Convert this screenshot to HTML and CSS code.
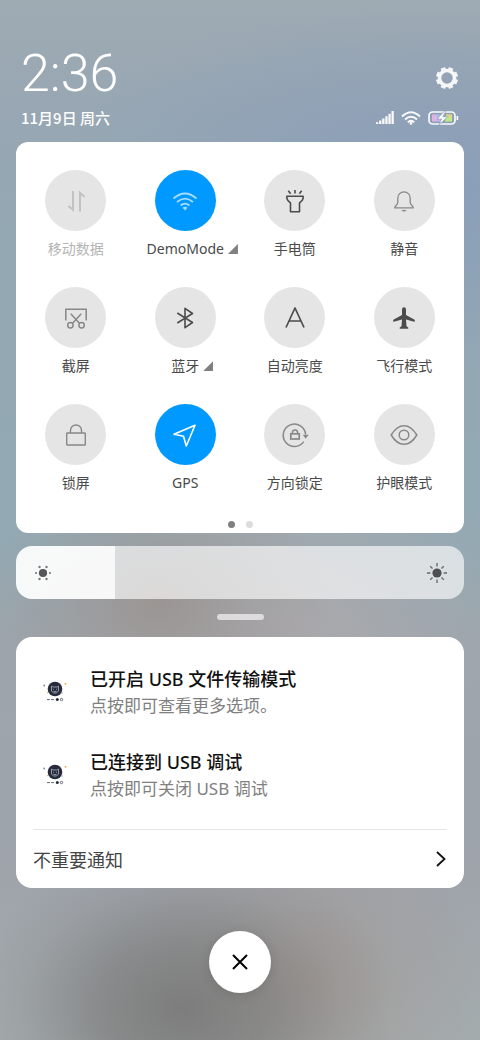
FILE: index.html
```html
<!DOCTYPE html>
<html lang="zh-CN">
<head>
<meta charset="utf-8">
<meta name="viewport" content="width=device-width, initial-scale=1">
<title>控制中心</title>
<link rel="stylesheet" href="styles.css">
</head>
<body>
<main class="shade">
  <header class="header">
    <div class="header-row">
      <time class="clock">2:36</time>
      <button class="icon-button settings" aria-label="设置">
        <svg width="24" height="24" viewBox="0 0 24 24" fill="none" stroke="currentColor">
          <circle cx="12" cy="12" r="7.5" stroke-width="3.6"/>
          <g stroke-width="4.8">
            <path d="M12 1v3M12 20v3M1 12h3M20 12h3" transform="rotate(22.5 12 12)"/>
            <path d="M12 1v3M12 20v3M1 12h3M20 12h3" transform="rotate(67.5 12 12)"/>
          </g>
        </svg>
      </button>
    </div>
    <div class="header-row">
      <span class="date">11月9日 周六</span>
      <div class="status">
        <svg width="18" height="14" viewBox="0 0 18 14" fill="currentColor"><path d="M0 11.2h2.3V13H0zM3.1 9.6h2.3V13H3.1zM6.2 7.6h2.3V13H6.2zM9.3 5.2h2.3V13H9.3zM12.4 2.8h2.3V13h-2.3zM15.5 0h2.3v13h-2.3z"/></svg>
        <svg width="20" height="14" viewBox="0 0 20 14" fill="none" stroke="currentColor" stroke-width="2"><path d="M1 5.4Q10-3 19 5.4M4 8.4q6-5.2 12 0M6.8 11.2q3.2-2.6 6.4 0"/><circle cx="10" cy="12.4" r="1.3" fill="currentColor" stroke="none"/></svg>
        <svg width="31" height="14" viewBox="0 0 31 14" fill="none">
          <rect x="1" y="1" width="26" height="12" rx="3.5" stroke="currentColor" stroke-width="1.7"/>
          <path d="M4 3.5h5v7H4z" fill="#e3b6ea"/><path d="M9 3.5h4l-4 5z" fill="#9fc4ef"/><path d="M9 8.5l4-1v3H9z" fill="#c9b7ee"/>
          <path d="M18 3.5h6v7h-7z" fill="#c2ee86"/><path d="M18 3.5h6l-3 4z" fill="#e8d08e"/>
          <path d="M16.5 0L9 8h4.6L11 14l8.6-8.3h-4.8L18 0z" fill="currentColor" stroke="#92a4b9" stroke-width=".7"/>
          <path d="M28.5 5h1.7v4h-1.7z" fill="currentColor"/>
        </svg>
      </div>
    </div>
  </header>

  <section class="panel tiles-panel" aria-label="快捷开关">
    <div class="tiles">
      <button class="tile disabled" disabled>
        <span class="tile-icon"><svg width="28" height="28" viewBox="0 0 28 28" fill="currentColor"><path d="M10 4h2v21l-6.4-5.6 1.2-1.2 3.2 2.4zM17 24.5h2V8.2l3.2 2.4 1.2-1.2L17 3.6z"/></svg></span>
        <span class="tile-label">移动数据</span>
      </button>
      <button class="tile active" aria-pressed="true">
        <span class="tile-icon faded"><svg width="28" height="28" viewBox="0 0 28 28" fill="none" stroke="currentColor" stroke-width="1.8"><path d="M2.5 11.5Q14 1.6 25.5 11.5M6 15q8-6.8 16 0M9.6 18.5q4.4-3.8 8.8 0"/><path d="M11.6 20.7q2.4-1.8 4.8 0L14 23.4z" fill="currentColor" stroke="none"/></svg></span>
        <span class="tile-label more">DemoMode</span>
      </button>
      <button class="tile dark">
        <span class="tile-icon"><svg width="28" height="28" viewBox="0 0 28 28" fill="none" stroke="currentColor" stroke-width="1.6"><path d="M5.8 9.2h16.4c0 3.6-1 4.6-3.7 6.7v8.8h-9v-8.8c-2.7-2.1-3.7-3.1-3.7-6.7zM14 3v3.6M7.3 3.8l2.3 2.9M20.7 3.8l-2.3 2.9" stroke-linejoin="round"/></svg></span>
        <span class="tile-label">手电筒</span>
      </button>
      <button class="tile">
        <span class="tile-icon"><svg width="28" height="28" viewBox="0 0 28 28" fill="none" stroke="currentColor" stroke-width="1.3"><path d="M7.8 11a6.2 6.2 0 0 1 12.4 0v4.5c0 2.4 3 3.2 3 5.4H4.8c0-2.2 3-3 3-5.4z" stroke-linejoin="round"/><path d="M11.2 23h5.6l-2 1.6h-1.6z" fill="currentColor" stroke="none"/></svg></span>
        <span class="tile-label">静音</span>
      </button>

      <button class="tile">
        <span class="tile-icon"><svg width="28" height="28" viewBox="0 0 28 28" fill="none" stroke="currentColor" stroke-width="1.5"><path d="M3.8 16.5V5.3h20.4v11.2M8.8 9.8l8.6 9.4M19.2 9.8l-8.6 9.4"/><circle cx="8.4" cy="21.3" r="2.7"/><circle cx="19.6" cy="21.3" r="2.7"/></svg></span>
        <span class="tile-label">截屏</span>
      </button>
      <button class="tile dark">
        <span class="tile-icon"><svg width="28" height="28" viewBox="0 0 28 28" fill="none" stroke="currentColor" stroke-width="1.6"><path d="M6.3 9l15.2 9.5L14 23.7V4.3l7.5 5.2L6.3 19" stroke-linejoin="round"/></svg></span>
        <span class="tile-label more">蓝牙</span>
      </button>
      <button class="tile dark">
        <span class="tile-icon"><svg width="28" height="28" viewBox="0 0 28 28" fill="none" stroke="currentColor" stroke-width="1.7"><path d="M5 23.5L14 4l9 19.5M8 17h12" stroke-linejoin="round"/></svg></span>
        <span class="tile-label">自动亮度</span>
      </button>
      <button class="tile dark">
        <span class="tile-icon"><svg width="28" height="28" viewBox="0 0 28 28" fill="currentColor"><path d="M12 5.2a2 2 0 0 1 4 0v5.7l8.2 4.6c.9.6.9 2.2 0 2.2L16 15.4l.5 6.8 1.8 1.2v1.4H9.7v-1.4l1.8-1.2.5-6.8-8.2 2.3c-.9 0-.9-1.6 0-2.2l8.2-4.6z"/></svg></span>
        <span class="tile-label">飞行模式</span>
      </button>

      <button class="tile">
        <span class="tile-icon"><svg width="28" height="28" viewBox="0 0 28 28" fill="none" stroke="currentColor" stroke-width="1.4"><rect x="4.7" y="12" width="18.6" height="12" rx=".6"/><path d="M8.5 12V9.5a5.5 5.5 0 0 1 11 0V12"/></svg></span>
        <span class="tile-label">锁屏</span>
      </button>
      <button class="tile active" aria-pressed="true">
        <span class="tile-icon"><svg width="28" height="28" viewBox="0 0 28 28" fill="none" stroke="currentColor" stroke-width="1.6"><path d="M24 4.3L3 13.3l9.5 2L15.3 25z" stroke-linejoin="round"/></svg></span>
        <span class="tile-label">GPS</span>
      </button>
      <button class="tile">
        <span class="tile-icon"><svg width="28" height="28" viewBox="0 0 28 28" fill="none" stroke="currentColor" stroke-width="1.5"><path d="M22.7 20.6A11.2 11.2 0 1 1 24.6 13.5"/><path d="M21.8 13.8h5.8l-2.9 4z" fill="currentColor" stroke="none"/><rect x="9.8" y="12.8" width="8.4" height="5.2" stroke-width="1.7"/><path d="M11.4 12.5v-1a2.6 2.6 0 0 1 5.2 0v1"/></svg></span>
        <span class="tile-label">方向锁定</span>
      </button>
      <button class="tile">
        <span class="tile-icon"><svg width="28" height="28" viewBox="0 0 28 28" fill="none" stroke="currentColor" stroke-width="1.5"><path d="M1.2 14C5 7.6 9.4 4.7 14 4.7S23 7.6 26.8 14C23 20.4 18.6 23.3 14 23.3S5 20.4 1.2 14z" stroke-linejoin="round"/><circle cx="14" cy="14" r="4.8"/></svg></span>
        <span class="tile-label">护眼模式</span>
      </button>
    </div>
    <div class="pager"><span class="dot current"></span><span class="dot"></span></div>
  </section>

  <div class="brightness">
    <input class="brightness-range" type="range" min="0" max="100" value="22" aria-label="亮度">
    <svg class="sun sun-low" width="22" height="22" viewBox="0 0 22 22" fill="#555759"><circle cx="11" cy="11" r="4.1"/><g fill="#777a7c"><circle cx="4" cy="11" r="1.1"/><circle cx="18" cy="11" r="1.1"/><circle cx="7.5" cy="5" r="1.2"/><circle cx="14.5" cy="5" r="1.2"/><circle cx="7.5" cy="17" r="1.2"/><circle cx="14.5" cy="17" r="1.2"/></g></svg>
    <svg class="sun sun-high" width="22" height="22" viewBox="0 0 22 22" fill="#4d4f50"><circle cx="11" cy="11" r="4.6"/><path d="M11 1v3.4M11 17.6V21M1 11h3.4M17.6 11H21M4.2 4.2l2.3 2.3M15.5 15.5l2.3 2.3M4.2 17.8l2.3-2.3M15.5 6.5l2.3-2.3" stroke="#666869" stroke-width="1.3"/></svg>
  </div>

  <div class="grabber"></div>

  <section class="panel notifications" aria-label="通知">
    <article class="notice">
      <svg class="notice-icon" width="26" height="26" viewBox="0 0 26 26"><circle cx="13" cy="12" r="7.3" fill="#272c3d"/><path d="M9.5 9l1.4 1h4.2l1.4-1v5l-2 2h-3l-2-2z" fill="none" stroke="#9498a4"/><path d="M11 12.3h1M14 12.3h1M11.5 14.5h3" stroke="#9498a4"/><path d="M5 22.6h3M9 22.6h3" stroke="#686b75"/><circle cx="15.3" cy="22.5" r="1.5" fill="#272c3d"/><circle cx="19.5" cy="22.5" r="1.2" fill="none" stroke="#686b75"/><circle cx="23.5" cy="6.7" r="1" fill="#eeae62"/><circle cx="2.2" cy="8.5" r=".9" fill="#7d8795"/><circle cx="5.5" cy="15.5" r=".7" fill="#edb477"/><circle cx="20" cy="16" r=".7" fill="#8b8ea0"/></svg>
      <div class="notice-text"><h2 class="notice-title">已开启 USB 文件传输模式</h2><p class="notice-detail">点按即可查看更多选项。</p></div>
    </article>
    <article class="notice">
      <svg class="notice-icon" width="26" height="26" viewBox="0 0 26 26"><circle cx="13" cy="12" r="7.3" fill="#272c3d"/><path d="M9.5 9l1.4 1h4.2l1.4-1v5l-2 2h-3l-2-2z" fill="none" stroke="#9498a4"/><path d="M11 12.3h1M14 12.3h1M11.5 14.5h3" stroke="#9498a4"/><path d="M5 22.6h3M9 22.6h3" stroke="#686b75"/><circle cx="15.3" cy="22.5" r="1.5" fill="#272c3d"/><circle cx="19.5" cy="22.5" r="1.2" fill="none" stroke="#686b75"/><circle cx="23.5" cy="6.7" r="1" fill="#eeae62"/><circle cx="2.2" cy="8.5" r=".9" fill="#7d8795"/><circle cx="5.5" cy="15.5" r=".7" fill="#edb477"/><circle cx="20" cy="16" r=".7" fill="#8b8ea0"/></svg>
      <div class="notice-text"><h2 class="notice-title">已连接到 USB 调试</h2><p class="notice-detail">点按即可关闭 USB 调试</p></div>
    </article>
    <button class="unimportant">
      <span>不重要通知</span>
      <svg width="12" height="18" viewBox="0 0 12 18" fill="none" stroke="#111" stroke-width="1.8"><path d="M2 2l7.5 7L2 16"/></svg>
    </button>
  </section>

  <button class="close" aria-label="关闭">
    <svg width="18" height="18" viewBox="0 0 18 18" fill="none" stroke="#000" stroke-width="2"><path d="M2 2l14 14M16 2L2 16"/></svg>
  </button>
</main>
</body>
</html>
```
FILE: styles.css
```css
* {
  box-sizing: border-box;
}

body {
  margin: 0;
  font-family: "Noto Sans", "Noto Sans CJK SC", sans-serif;
  color: #444;
}

button {
  margin: 0;
  padding: 0;
  border: 0;
  background: none;
  color: inherit;
  font: inherit;
}

svg {
  display: block;
  flex: none;
}

.shade {
  display: flex;
  flex-direction: column;
  min-height: 100vh;
  padding: 44px 16px 47px;
  background:
    radial-gradient(ellipse 44% 16% at 38% 97%, rgba(120, 120, 119, 0.9), rgba(121, 121, 120, 0.62) 40%, rgba(128, 128, 130, 0.2) 75%, transparent),
    radial-gradient(ellipse 36% 16% at 64% 94%, rgba(162, 149, 141, 0.7), rgba(162, 152, 147, 0.35) 50%, transparent),
    radial-gradient(ellipse 36% 13% at 33% 58%, rgba(154, 146, 142, 0.85), rgba(158, 151, 149, 0.45) 50%, transparent),
    radial-gradient(ellipse 45% 18% at 62% 60%, rgba(171, 169, 172, 0.9), rgba(168, 169, 173, 0.5) 55%, transparent),
    radial-gradient(ellipse 80% 18% at 90% 18%, rgba(137, 157, 186, 0.9), rgba(140, 158, 184, 0.5) 55%, transparent),
    linear-gradient(#9fabb3, #98a7b3 10%, #93a8b3 24%, #93a9b3 53%, #9da5ac 62%, #9fa4ab 84%, #a4abad);
}

.header {
  display: grid;
  gap: 3px;
  padding: 0 5px;
  margin-bottom: 13px;
  color: #fff;
}

.header-row {
  display: flex;
  align-items: center;
  justify-content: space-between;
}

.clock {
  font: 300 52px/60px Roboto, sans-serif;
}

.settings {
  padding-top: 8px;
  opacity: 0.9;
}

.date {
  font-family: "Noto Sans CJK SC", sans-serif;
  font-size: 15px;
  line-height: 22px;
  font-weight: 500;
}

.status {
  display: flex;
  align-items: center;
  gap: 7px;
  opacity: 0.95;
}

.panel {
  border-radius: 16px;
  background: #fff;
}

.tiles-panel {
  padding: 28px 5px 5px;
  border-radius: 12px;
}

.tiles {
  display: grid;
  grid-template-columns: repeat(4, 1fr);
  row-gap: 28px;
}

.tile {
  display: flex;
  flex-direction: column;
  align-items: center;
  gap: 8px;
}

.tile-icon {
  display: grid;
  place-items: center;
  width: 61px;
  height: 61px;
  border-radius: 50%;
  background: #e5e5e5;
  color: #888;
}

.tile-label {
  position: relative;
  font-size: 14px;
  line-height: 20px;
  color: #4a4a4a;
  white-space: nowrap;
}

.tile.dark .tile-icon {
  color: #4c4c4c;
}

.tile.active .tile-icon {
  background: #0099ff;
  color: #fff;
}

.tile.active .faded {
  color: #a6dcff;
}

.tile.disabled .tile-icon {
  color: #c2c2c2;
}

.tile.disabled .tile-label {
  color: #b4b4b4;
}

.more::after {
  content: "";
  position: absolute;
  left: calc(100% + 4px);
  top: 5px;
  width: 10px;
  height: 10px;
  background: #808080;
  clip-path: polygon(100% 0, 100% 100%, 0 100%);
}

.pager {
  display: flex;
  justify-content: center;
  gap: 11px;
  margin-top: 28px;
}

.dot {
  width: 7px;
  height: 7px;
  border-radius: 50%;
  background: #dcdcdc;
}

.dot.current {
  background: #808080;
}

.brightness {
  position: relative;
  margin-top: 13px;
}

.brightness-range {
  display: block;
  appearance: none;
  width: 100%;
  height: 53px;
  margin: 0;
  border-radius: 16px;
  background: linear-gradient(90deg, rgba(255, 255, 255, 0.93) 22%, rgba(255, 255, 255, 0.64) 22%);
}

.brightness-range::-webkit-slider-thumb {
  appearance: none;
  width: 1px;
  height: 53px;
  background: transparent;
}

.sun {
  position: absolute;
  top: 16px;
  pointer-events: none;
}

.sun-low {
  left: 16px;
}

.sun-high {
  right: 16px;
}

.grabber {
  width: 47px;
  height: 6px;
  margin: 15px auto 17px;
  border-radius: 3px;
  background: #dcdcdd;
}

.notifications {
  padding: 30px 17px 0;
}

.notice {
  display: flex;
  gap: 22px;
  padding-left: 9px;
}

.notice + .notice {
  margin-top: 32px;
}

.notice-icon {
  margin-top: 10px;
}

.notice-title {
  margin: 0 0 3px;
  font-size: 18px;
  line-height: 24px;
  font-weight: 500;
  color: #111;
}

.notice-detail {
  margin: 0;
  font-size: 17px;
  line-height: 24px;
  color: #808080;
}

.unimportant {
  display: flex;
  align-items: center;
  justify-content: space-between;
  width: 100%;
  height: 59px;
  margin-top: 28px;
  border-top: 1px solid #e6e6e6;
  font-size: 18px;
}

.close {
  display: grid;
  place-items: center;
  width: 62px;
  height: 62px;
  margin: 43px auto 0;
  border-radius: 50%;
  background: #fff;
  box-shadow: 0 2px 12px rgba(0, 0, 0, 0.12);
}
```
